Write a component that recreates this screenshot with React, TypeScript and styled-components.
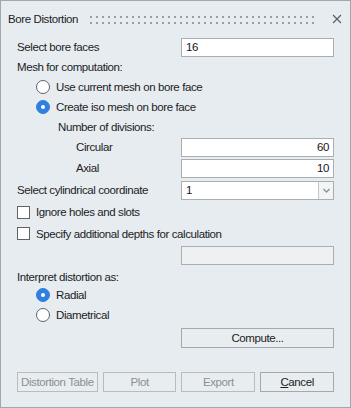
import React from "react";
import styled, { createGlobalStyle } from "styled-components";

const GlobalStyle = createGlobalStyle`
  html, body {
    margin: 0;
    padding: 0;
    background: #e6ecf0;
  }
  * {
    box-sizing: border-box;
  }
`

const Window = styled.div`
  width: 351px;
  height: 408px;
  border: 1px solid #a3a8ac;
  background: #e6ecf0;
  display: flex;
  flex-direction: column;
  font-family: "Liberation Sans", Arial, sans-serif;
  font-size: 11.5px;
  letter-spacing: -0.4px;
  color: #1c1c24;
`

const TitleBar = styled.div`
  height: 36px;
  display: flex;
  align-items: center;
  padding: 0 8px 0 7px;
  gap: 10px;
`

const Grip = styled.div`
  flex: 1;
  height: 12px;
  margin-right: 8px;
  background-image: radial-gradient(circle, #9a9ea2 0.9px, transparent 1.1px);
  background-size: 6px 6px;
  background-position: 0 1px;
`

const CloseBtn = styled.div`
  width: 10px;
  height: 10px;
  display: flex;
  align-items: center;
  justify-content: center;
`

const Body = styled.div`
  display: flex;
  flex-direction: column;
  padding: 0 16px;
  flex: 1;
`

const Row = styled.div<{ $h: number; $indent?: number }>`
  height: ${(p) => p.$h}px;
  display: flex;
  align-items: center;
  padding-left: ${(p) => p.$indent || 0}px;
`

const Label = styled.span<{ $indent?: number }>`
  flex: 1;
  padding-left: ${(p) => p.$indent || 0}px;
  white-space: nowrap;
`

const Field = styled.div<{ $right?: boolean; $disabled?: boolean }>`
  width: 153px;
  height: 19px;
  border: 1px solid #abaeb1;
  background: ${(p) => (p.$disabled ? "#eef0f1" : "#ffffff")};
  display: flex;
  align-items: center;
  justify-content: ${(p) => (p.$right ? "flex-end" : "flex-start")};
  padding: 0 4px;
  color: #1a1420;
`

const Combo = styled.div`
  width: 153px;
  height: 19px;
  border: 1px solid #abaeb1;
  background: #ffffff;
  display: flex;
  align-items: center;
  color: #1a1420;
  .value {
    flex: 1;
    padding-left: 4px;
  }
  .drop {
    width: 15px;
    height: 100%;
    border-left: 1px solid #c3c6c8;
    background: #f2f4f5;
    display: flex;
    align-items: center;
    justify-content: center;
  }
`

const RadioDot = styled.span<{ $on?: boolean }>`
  width: 14px;
  height: 14px;
  border-radius: 50%;
  border: 1px solid ${(p) => (p.$on ? "#2f7fe0" : "#5f6266")};
  background: ${(p) => (p.$on ? "#2f7fe0" : "#ffffff")};
  display: flex;
  align-items: center;
  justify-content: center;
  margin-right: 6px;
  &::after {
    content: "";
    width: 4px;
    height: 4px;
    border-radius: 50%;
    background: #ffffff;
    display: ${(p) => (p.$on ? "block" : "none")};
  }
`

const CheckBox = styled.span`
  width: 13px;
  height: 13px;
  border: 1px solid #5f6266;
  background: #ffffff;
  margin-right: 6px;
`

const Button = styled.div<{ $disabled?: boolean; $w?: number }>`
  width: ${(p) => p.$w || 153}px;
  height: 20px;
  border: 1px solid ${(p) => (p.$disabled ? "#b8bcbf" : "#a5a9ac")};
  background: #e8edf0;
  display: flex;
  align-items: center;
  justify-content: center;
  color: ${(p) => (p.$disabled ? "#8b8f94" : "#1c1c24")};
  u {
    text-decoration: underline;
    text-underline-offset: 1px;
  }
`

const Footer = styled.div`
  display: flex;
  gap: 5px;
  padding: 0 16px 15px;
  margin-top: auto;
`

export default function App() {
  return (
    <>
      <GlobalStyle />
      <Window>
        <TitleBar>
          <span>Bore Distortion</span>
          <Grip />
          <CloseBtn>
            <svg width="10" height="10" viewBox="0 0 10 10">
              <path d="M1 1L9 9M9 1L1 9" stroke="#5a5d61" strokeWidth="1.1" />
            </svg>
          </CloseBtn>
        </TitleBar>
        <Body>
          <Row $h={20}>
            <Label>Select bore faces</Label>
            <Field>16</Field>
          </Row>
          <Row $h={20}>
            <Label>Mesh for computation:</Label>
          </Row>
          <Row $h={20} $indent={19}>
            <RadioDot />
            <span>Use current mesh on bore face</span>
          </Row>
          <Row $h={20} $indent={19}>
            <RadioDot $on />
            <span>Create iso mesh on bore face</span>
          </Row>
          <Row $h={20}>
            <Label $indent={41}>Number of divisions:</Label>
          </Row>
          <Row $h={20}>
            <Label $indent={59}>Circular</Label>
            <Field $right>60</Field>
          </Row>
          <Row $h={22}>
            <Label $indent={59}>Axial</Label>
            <Field $right>10</Field>
          </Row>
          <Row $h={22}>
            <Label>Select cylindrical coordinate</Label>
            <Combo>
              <span className="value">1</span>
              <span className="drop">
                <svg width="7" height="5" viewBox="0 0 7 5">
                  <path d="M0.5 1L3.5 4L6.5 1" stroke="#8a8e92" strokeWidth="1.3" fill="none" />
                </svg>
              </span>
            </Combo>
          </Row>
          <Row $h={22}>
            <CheckBox />
            <span>Ignore holes and slots</span>
          </Row>
          <Row $h={21}>
            <CheckBox />
            <span>Specify additional depths for calculation</span>
          </Row>
          <Row $h={23}>
            <Label />
            <Field $disabled />
          </Row>
          <Row $h={19}>
            <Label>Interpret distortion as:</Label>
          </Row>
          <Row $h={17} $indent={19}>
            <RadioDot $on />
            <span>Radial</span>
          </Row>
          <Row $h={24} $indent={19}>
            <RadioDot />
            <span>Diametrical</span>
          </Row>
          <Row $h={22}>
            <Label />
            <Button>Compute...</Button>
          </Row>
        </Body>
        <Footer>
          <Button $disabled $w={81}>Distortion Table</Button>
          <Button $disabled $w={74}>Plot</Button>
          <Button $disabled $w={74}>Export</Button>
          <Button $w={74}>
            <span><u>C</u>ancel</span>
          </Button>
        </Footer>
      </Window>
    </>
  );
}
